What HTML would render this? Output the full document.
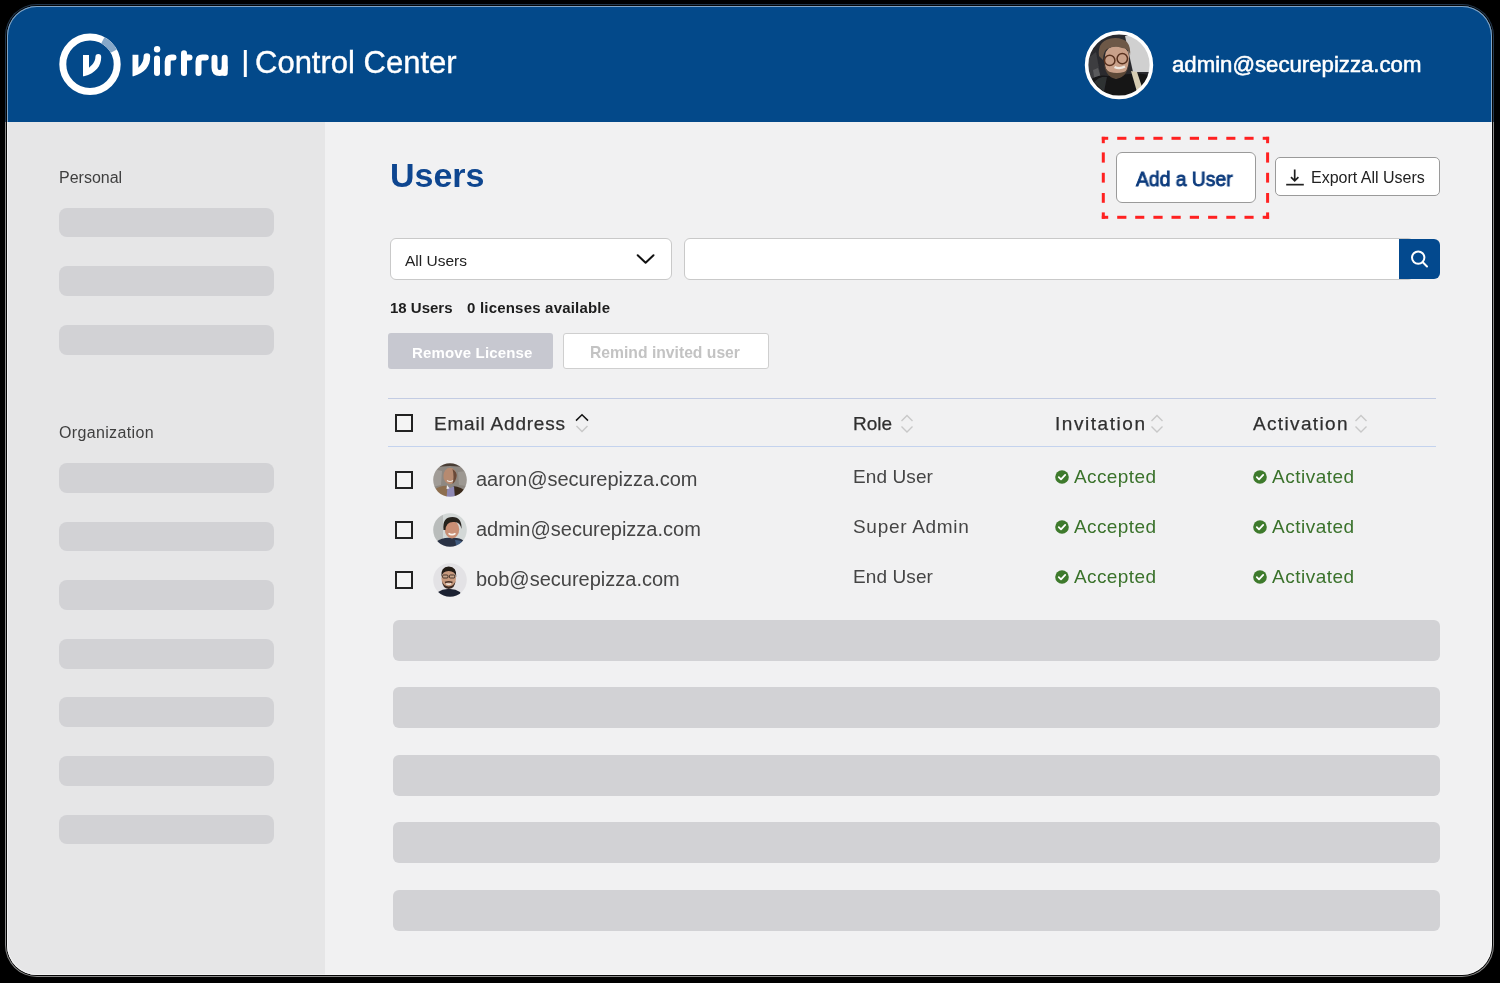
<!DOCTYPE html>
<html><head><meta charset="utf-8">
<style>
html,body{margin:0;padding:0;background:#000;width:1500px;height:983px;overflow:hidden}
*{box-sizing:border-box}
body{font-family:"Liberation Sans",sans-serif;position:relative;-webkit-font-smoothing:antialiased}
.ring{position:absolute;left:5px;top:4px;width:1489px;height:973px;border-radius:32px;background:linear-gradient(to bottom,#22374d 0,#22374d 118px,#8a8a8a 118px)}
.dark{position:absolute;left:6px;top:5px;width:1487px;height:971px;border-radius:31px;background:#050505}
.win{position:absolute;left:7px;top:6px;width:1485px;height:969px;border-radius:30px;overflow:hidden;background:#F1F1F2}
.hl{position:absolute;left:0;top:0;width:1485px;height:969px;border-radius:30px;box-shadow:inset 0 0 0 1px rgba(255,255,255,0.5)}
.hdr{position:absolute;left:0;top:0;width:1485px;height:116px;background:#03498A}
.side{position:absolute;left:0;top:116px;width:318px;height:853px;background:#E6E6E7}
.t{position:absolute;line-height:1;white-space:nowrap;will-change:transform}
.sk{position:absolute;background:#D2D2D5;border-radius:8px}
.skm{position:absolute;background:#D2D2D5;border-radius:6px;left:387px;width:1047px;height:41px}
.abs{position:absolute}
.cb{position:absolute;width:18px;height:18px;border:2px solid #222;background:#F4F4F4}
.av{position:absolute;width:34px;height:34px;border-radius:50%;overflow:hidden}
</style></head>
<body>
<div class="ring"></div><div class="dark"></div>
<div class="win">
  <div class="hdr"></div>
  <div class="side"></div>
  <div class="hl"></div>
</div>

<!-- logo -->
<svg class="abs" style="left:0;top:0" width="480" height="120" viewBox="0 0 480 120">
  <circle cx="90" cy="64.3" r="27.2" fill="none" stroke="#fff" stroke-width="7"/>
  <path d="M 102.8 40.3 A 27.2 27.2 0 0 1 113.8 51.1" fill="none" stroke="#86A8C9" stroke-width="7"/>
  <path d="M83 55 L89 55 L89 67.7 C 91.5 65.5, 95.4 62, 95.4 57 A 2.9 2.9 0 0 1 101.2 57 C 101.2 66, 96 73, 84 76.3 L83 76.3 Z" fill="#fff"/>
  <path d="M132.5 54.8 L138.4 54.8 L138.4 67.7 C 140.5 65.5, 143.6 62, 143.6 56.5 A 3.3 3.3 0 0 1 150.2 56.5 C 150.2 66, 145 73, 133.5 76.2 L132.5 76.2 Z" fill="#fff"/>
  <g fill="none" stroke="#fff" stroke-width="6" stroke-linecap="round" stroke-linejoin="round">
    <path d="M157 58.5 L157 73"/>
    <path d="M167.7 73 L167.7 61.5 Q167.7 57.6 171.5 57.6 L173.5 57.6"/>
    <path d="M184 53.3 L184 73"/>
    <path d="M184 57.6 L189.5 57.6"/>
    <path d="M198.5 73 L198.5 61.5 Q198.5 57.6 202.3 57.6 L205.8 57.6"/>
    <path d="M214.5 57.8 L214.5 67.5 Q214.5 73 219.6 73 Q224.7 73 224.7 67.5"/>
    <path d="M224.7 57.8 L224.7 73"/>
  </g>
  <circle cx="157.1" cy="49.3" r="3.2" fill="#fff"/>
  <rect x="243.8" y="50" width="3" height="27" fill="#fff"/>
</svg>
<div class="t" style="left:255px;top:46.8px;font-size:31px;color:#fff;-webkit-text-stroke:0.35px #fff">Control Center</div>

<!-- header avatar -->
<svg class="abs" style="left:1084px;top:30px" width="70" height="70" viewBox="0 0 70 70">
  <defs><clipPath id="hc"><circle cx="35" cy="35" r="32"/></clipPath>
  <filter id="bl1" x="-10%" y="-10%" width="120%" height="120%"><feGaussianBlur stdDeviation="0.7"/></filter></defs>
  <g clip-path="url(#hc)"><g filter="url(#bl1)">
    <rect x="-2" y="-2" width="74" height="74" fill="#2c2c2f"/>
    <path d="M41 6 L72 6 L72 42 L49 42 L45 24Z" fill="#d0d0d0"/>
    <path d="M2 30 L12 22 L16 44 L12 62 L2 56Z" fill="#3d3d40"/>
    <path d="M9 40 L14 38 L20 58 L12 60Z" fill="#5a5a5c"/>
    <path d="M-2 72 L6 50 Q14 44 24 46 L46 44 Q60 42 72 48 L72 72Z" fill="#141417"/>
    <path d="M10 52 Q16 46 23 47 L20 62 Z" fill="#2f3033"/>
    <path d="M47 41 L53 42 L59 60 L53 62Z" fill="#d5ccb2"/>
    <path d="M21 26 Q19 44 32 48.5 Q45 46 45 26 Q44 16 33 16 Q22 16 21 26Z" fill="#c9a18a"/>
    <path d="M20 32 Q21 47 32 49 Q44 47 45 32 Q44 41 40 42 Q33 44 26 42 Q21 40 20 32Z" fill="#5c4839"/>
    <path d="M15 26 Q13 9 31 8 Q48 8 46 26 Q45 18 38 18 Q30 15 23 19 Q19 22 19 30Z" fill="#6d5847"/>
    <circle cx="25.7" cy="30.4" r="5.2" fill="none" stroke="#58301f" stroke-width="1.5"/>
    <circle cx="38.3" cy="28.6" r="5.2" fill="none" stroke="#58301f" stroke-width="1.5"/>
    <path d="M30.5 37 Q35.5 39.5 41 36.5" fill="none" stroke="#efe9e2" stroke-width="2.3"/>
  </g></g>
  <circle cx="35" cy="35" r="32.4" fill="none" stroke="#fff" stroke-width="3.6"/>
</svg>
<div class="t" style="left:1171.5px;top:54.2px;font-size:22.2px;font-weight:400;color:#fff;-webkit-text-stroke:0.55px #fff">admin@securepizza.com</div>

<!-- sidebar -->
<div class="t" style="left:59px;top:169.5px;font-size:16px;color:#3f3f3f">Personal</div>
<div class="sk" style="left:59px;top:207.7px;width:215px;height:29.8px"></div>
<div class="sk" style="left:59px;top:266.3px;width:215px;height:29.8px"></div>
<div class="sk" style="left:59px;top:324.9px;width:215px;height:29.8px"></div>
<div class="t" style="left:59px;top:424.7px;font-size:16px;color:#3f3f3f;letter-spacing:0.35px">Organization</div>
<div class="sk" style="left:59px;top:463.0px;width:215px;height:29.8px"></div>
<div class="sk" style="left:59px;top:521.6px;width:215px;height:29.8px"></div>
<div class="sk" style="left:59px;top:580.2px;width:215px;height:29.8px"></div>
<div class="sk" style="left:59px;top:638.8px;width:215px;height:29.8px"></div>
<div class="sk" style="left:59px;top:697.4px;width:215px;height:29.8px"></div>
<div class="sk" style="left:59px;top:756.0px;width:215px;height:29.8px"></div>
<div class="sk" style="left:59px;top:814.6px;width:215px;height:29.8px"></div>

<!-- main -->
<div class="t" style="left:390px;top:158.2px;font-size:34px;font-weight:700;color:#0E4690">Users</div>

<!-- red dashed box -->
<svg class="abs" style="left:0;top:0" width="1300" height="230" viewBox="0 0 1300 230"><g fill="#FF2121"><rect x="1117.2" y="136.8" width="9.2" height="3.0"/><rect x="1117.2" y="215.8" width="9.2" height="3.0"/><rect x="1135.2" y="136.8" width="9.1" height="3.0"/><rect x="1135.2" y="215.8" width="9.1" height="3.0"/><rect x="1153.4" y="136.8" width="9.2" height="3.0"/><rect x="1153.4" y="215.8" width="9.2" height="3.0"/><rect x="1171.5" y="136.8" width="9.2" height="3.0"/><rect x="1171.5" y="215.8" width="9.2" height="3.0"/><rect x="1189.8" y="136.8" width="9.2" height="3.0"/><rect x="1189.8" y="215.8" width="9.2" height="3.0"/><rect x="1208.1" y="136.8" width="9.1" height="3.0"/><rect x="1208.1" y="215.8" width="9.1" height="3.0"/><rect x="1226.3" y="136.8" width="9.1" height="3.0"/><rect x="1226.3" y="215.8" width="9.1" height="3.0"/><rect x="1244.5" y="136.8" width="9.1" height="3.0"/><rect x="1244.5" y="215.8" width="9.1" height="3.0"/><rect x="1101.8" y="152.4" width="3.0" height="10.2"/><rect x="1266.1" y="152.4" width="3.0" height="10.2"/><rect x="1101.8" y="172.8" width="3.0" height="9.8"/><rect x="1266.1" y="172.8" width="3.0" height="9.8"/><rect x="1101.8" y="193.0" width="3.0" height="9.8"/><rect x="1266.1" y="193.0" width="3.0" height="9.8"/><rect x="1101.8" y="136.8" width="6.4" height="3.0"/><rect x="1101.8" y="136.8" width="3.0" height="6.4"/><rect x="1262.7" y="136.8" width="6.4" height="3.0"/><rect x="1266.1" y="136.8" width="3.0" height="6.4"/><rect x="1101.8" y="215.8" width="6.4" height="3.0"/><rect x="1101.8" y="212.4" width="3.0" height="6.4"/><rect x="1262.7" y="215.8" width="6.4" height="3.0"/><rect x="1266.1" y="212.4" width="3.0" height="6.4"/></g></svg>
<div class="abs" style="left:1116px;top:151.5px;width:140px;height:51.5px;background:#fff;border:1px solid #9a9a9a;border-radius:6px"></div>
<div class="t" style="left:1136px;top:168.6px;font-size:20px;font-weight:400;color:#0B3A7C;-webkit-text-stroke:0.85px #0B3A7C;transform:scaleX(0.965);transform-origin:0 0">Add a User</div>

<div class="abs" style="left:1275px;top:157px;width:165px;height:39px;background:#fff;border:1px solid #9a9a9a;border-radius:5px"></div>
<svg class="abs" style="left:1284px;top:166px" width="22" height="22" viewBox="0 0 22 22">
  <path d="M10.7 3.6 L10.7 14.6 M7 11.2 L10.7 14.9 L14.4 11.2" fill="none" stroke="#1e1e1e" stroke-width="1.7"/>
  <rect x="2.2" y="17.8" width="17.6" height="1.7" fill="#222"/>
</svg>
<div class="t" style="left:1311px;top:169.7px;font-size:16px;color:#222">Export All Users</div>

<!-- select -->
<div class="abs" style="left:390px;top:238px;width:282px;height:42px;background:#fff;border:1px solid #c9c9c9;border-radius:6px"></div>
<div class="t" style="left:405px;top:252.7px;font-size:15.5px;color:#222">All Users</div>
<svg class="abs" style="left:634px;top:250px" width="24" height="18" viewBox="0 0 24 18">
  <path d="M3.7 5.2 L11.6 12.8 L19.5 5.2" fill="none" stroke="#111" stroke-width="2" stroke-linecap="round" stroke-linejoin="round"/>
</svg>
<!-- search -->
<div class="abs" style="left:684px;top:238px;width:730px;height:42px;background:#fff;border:1px solid #c9c9c9;border-radius:6px"></div>
<div class="abs" style="left:1399px;top:239px;width:41px;height:40px;background:#03498E;border-radius:0 6px 6px 0"></div>
<svg class="abs" style="left:1405px;top:244px" width="30" height="30" viewBox="0 0 30 30">
  <circle cx="13.2" cy="13.6" r="6.2" fill="none" stroke="#fff" stroke-width="2"/>
  <path d="M17.8 18.3 L22 22.5" stroke="#fff" stroke-width="2" stroke-linecap="round"/>
</svg>

<div class="t" style="left:390px;top:300px;font-size:15px;font-weight:700;color:#1d1d1d">18 Users</div>
<div class="t" style="left:467px;top:300px;font-size:15px;font-weight:700;color:#1d1d1d;letter-spacing:0.2px">0 licenses available</div>

<div class="abs" style="left:388px;top:332.5px;width:164.5px;height:36.5px;background:#C7C8D0;border-radius:3px"></div>
<div class="t" style="left:412px;top:344.5px;font-size:15px;font-weight:700;color:#fff;letter-spacing:0.15px">Remove License</div>
<div class="abs" style="left:562.5px;top:332.5px;width:206px;height:36.5px;background:#fff;border:1px solid #cfcfcf;border-radius:3px"></div>
<div class="t" style="left:590px;top:344.5px;font-size:15.7px;font-weight:700;color:#c3c3c3">Remind invited user</div>

<!-- table -->
<div class="abs" style="left:388px;top:397.5px;width:1048px;height:1.5px;background:#C3CCE3"></div>
<div class="abs" style="left:388px;top:445.5px;width:1048px;height:1.5px;background:#C4D3EE"></div>
<div class="cb" style="left:395px;top:414px"></div>
<div class="t" style="left:434px;top:413.9px;font-size:19px;color:#2f2f2f;-webkit-text-stroke:0.25px #2f2f2f;letter-spacing:0.8px">Email Address</div>
<svg class="abs" style="left:572px;top:411px" width="20" height="26" viewBox="0 0 20 26">
  <path d="M4 9.6 L10 3.8 L16 9.6" fill="none" stroke="#151515" stroke-width="1.5"/>
  <path d="M4.5 14.9 L10 20.6 L15.5 14.9" fill="none" stroke="#c8c8c8" stroke-width="1.4"/>
</svg>
<div class="t" style="left:853px;top:413.9px;font-size:19px;color:#2f2f2f;-webkit-text-stroke:0.25px #2f2f2f">Role</div>
<svg class="abs" style="left:897px;top:411px" width="20" height="26" viewBox="0 0 20 26">
  <path d="M4.5 10 L10 4.5 L15.5 10" fill="none" stroke="#c8c8c8" stroke-width="1.4"/>
  <path d="M4.5 15.5 L10 21 L15.5 15.5" fill="none" stroke="#c8c8c8" stroke-width="1.4"/>
</svg>
<div class="t" style="left:1055px;top:413.9px;font-size:19px;color:#2f2f2f;-webkit-text-stroke:0.25px #2f2f2f;letter-spacing:1.55px">Invitation</div>
<svg class="abs" style="left:1146.5px;top:411px" width="20" height="26" viewBox="0 0 20 26">
  <path d="M4.5 10 L10 4.5 L15.5 10" fill="none" stroke="#c8c8c8" stroke-width="1.4"/>
  <path d="M4.5 15.5 L10 21 L15.5 15.5" fill="none" stroke="#c8c8c8" stroke-width="1.4"/>
</svg>
<div class="t" style="left:1253px;top:413.9px;font-size:19px;color:#2f2f2f;-webkit-text-stroke:0.25px #2f2f2f;letter-spacing:1.35px">Activation</div>
<svg class="abs" style="left:1350.5px;top:411px" width="20" height="26" viewBox="0 0 20 26">
  <path d="M4.5 10 L10 4.5 L15.5 10" fill="none" stroke="#c8c8c8" stroke-width="1.4"/>
  <path d="M4.5 15.5 L10 21 L15.5 15.5" fill="none" stroke="#c8c8c8" stroke-width="1.4"/>
</svg>
<div class="cb" style="left:395px;top:470.8px"></div>
<svg class="abs" style="left:433px;top:463px" width="34" height="34" viewBox="0 0 34 34"><defs><clipPath id="ac0"><circle cx="17" cy="17" r="16.8"/></clipPath><filter id="bf0" x="-10%" y="-10%" width="120%" height="120%"><feGaussianBlur stdDeviation="0.45"/></filter></defs><g clip-path="url(#ac0)"><g filter="url(#bf0)"><rect x="-2" y="-2" width="38" height="38" fill="#8e8882"/>
 <path d="M0 6 L9 8 L8 22 L0 24Z" fill="#a19c97"/><path d="M34 8 L25 9 L26 22 L34 23Z" fill="#9d9892"/>
 <path d="M0 0 L34 0 L34 5 Q17 1 0 5Z" fill="#4a3e36"/>
 <path d="M-2 36 L1 27 Q8 22 15 23 L16 36Z" fill="#8d6e50"/>
 <path d="M20 23 Q29 24 33 29 L36 36 L21 36Z" fill="#3b2a1f"/>
 <path d="M14.5 23 L13.5 36 L22 36 L21 23 L17.8 25Z" fill="#8e88b4"/>
 <path d="M14 22 L16.5 25.5 L13.5 26Z" fill="#f0f0f0"/>
 <ellipse cx="17" cy="13" rx="6.6" ry="8.3" fill="#b78a70"/>
 <path d="M19.5 6 Q24.5 9 23.5 14 Q22.5 19 19.5 21 Q21.5 14 19.5 6Z" fill="#6a4a38"/>
 <path d="M14 17.5 Q17 19.5 20 17.5" stroke="#f2ece6" stroke-width="1.2" fill="none"/></g></g></svg>
<div class="t" style="left:476px;top:468.9px;font-size:20px;color:#454545">aaron@securepizza.com</div>
<div class="t" style="left:853px;top:467.1px;font-size:19px;color:#454545;letter-spacing:0.1px">End User</div>
<svg class="abs" style="left:1055px;top:469.8px" width="14" height="14" viewBox="0 0 14 14"><circle cx="7" cy="7" r="6.8" fill="#3E7A2C"/><path d="M3.8 7.2 L6 9.4 L10.2 4.9" fill="none" stroke="#fff" stroke-width="1.8" stroke-linecap="round" stroke-linejoin="round"/></svg>
<div class="t" style="left:1073.5px;top:466.6px;font-size:19px;color:#3A722B;letter-spacing:0.4px">Accepted</div>
<svg class="abs" style="left:1253px;top:469.8px" width="14" height="14" viewBox="0 0 14 14"><circle cx="7" cy="7" r="6.8" fill="#3E7A2C"/><path d="M3.8 7.2 L6 9.4 L10.2 4.9" fill="none" stroke="#fff" stroke-width="1.8" stroke-linecap="round" stroke-linejoin="round"/></svg>
<div class="t" style="left:1271.8px;top:466.6px;font-size:19px;color:#3A722B;letter-spacing:0.5px">Activated</div>
<div class="cb" style="left:395px;top:520.8px"></div>
<svg class="abs" style="left:433px;top:513px" width="34" height="34" viewBox="0 0 34 34"><defs><clipPath id="ac1"><circle cx="17" cy="17" r="16.8"/></clipPath><filter id="bf1" x="-10%" y="-10%" width="120%" height="120%"><feGaussianBlur stdDeviation="0.45"/></filter></defs><g clip-path="url(#ac1)"><g filter="url(#bf1)"><rect x="-2" y="-2" width="38" height="38" fill="#d3d8d7"/>
 <rect x="-2" y="-2" width="12" height="38" fill="#b9bcbb"/>
 <path d="M-2 36 L3 29 Q10 24 18 25 Q26 24 31 28 L36 36Z" fill="#2b3344"/>
 <path d="M22 27 Q28 27 31 30 L33 36 L24 36Z" fill="#3f5a7e"/>
 <ellipse cx="19" cy="16.5" rx="7.2" ry="9" fill="#c98f74"/>
 <path d="M10.5 17 Q9 4 19.5 4 Q29 4 28.5 16 Q27 8 20 9 Q13 9 12.5 17Z" fill="#27211e"/>
 <path d="M15.5 20.3 Q19 23 22.5 20.3" stroke="#fbf4ee" stroke-width="1.6" fill="none"/></g></g></svg>
<div class="t" style="left:476px;top:518.9px;font-size:20px;color:#454545">admin@securepizza.com</div>
<div class="t" style="left:853px;top:517.1px;font-size:19px;color:#454545;letter-spacing:0.7px">Super Admin</div>
<svg class="abs" style="left:1055px;top:519.8px" width="14" height="14" viewBox="0 0 14 14"><circle cx="7" cy="7" r="6.8" fill="#3E7A2C"/><path d="M3.8 7.2 L6 9.4 L10.2 4.9" fill="none" stroke="#fff" stroke-width="1.8" stroke-linecap="round" stroke-linejoin="round"/></svg>
<div class="t" style="left:1073.5px;top:516.6px;font-size:19px;color:#3A722B;letter-spacing:0.4px">Accepted</div>
<svg class="abs" style="left:1253px;top:519.8px" width="14" height="14" viewBox="0 0 14 14"><circle cx="7" cy="7" r="6.8" fill="#3E7A2C"/><path d="M3.8 7.2 L6 9.4 L10.2 4.9" fill="none" stroke="#fff" stroke-width="1.8" stroke-linecap="round" stroke-linejoin="round"/></svg>
<div class="t" style="left:1271.8px;top:516.6px;font-size:19px;color:#3A722B;letter-spacing:0.5px">Activated</div>
<div class="cb" style="left:395px;top:570.8px"></div>
<svg class="abs" style="left:433px;top:563px" width="34" height="34" viewBox="0 0 34 34"><defs><clipPath id="ac2"><circle cx="17" cy="17" r="16.8"/></clipPath><filter id="bf2" x="-10%" y="-10%" width="120%" height="120%"><feGaussianBlur stdDeviation="0.45"/></filter></defs><g clip-path="url(#ac2)"><g filter="url(#bf2)"><rect x="-2" y="-2" width="38" height="38" fill="#e3e2e5"/>
 <path d="M3 36 L5 29 Q10 25.5 16 26 Q22 25.5 27 29 L30 36Z" fill="#1d2130"/>
 <ellipse cx="15.7" cy="15.5" rx="7.3" ry="9" fill="#c89a7e"/>
 <path d="M9 18 Q9.5 25.5 15.7 26 Q22 25.5 22.5 18 Q21 23 15.7 23.5 Q10.5 23 9 18Z" fill="#3e2c24"/>
 <path d="M12 19.5 Q15.7 18 19.5 19.5" stroke="#4a3228" stroke-width="1.4" fill="none"/>
 <path d="M8.3 14 Q7.5 3.5 15.7 3.5 Q24 3.5 23.3 14 Q22 8 15.7 8 Q9.5 8 8.3 14Z" fill="#231a16"/>
 <rect x="9.6" y="12" width="5.4" height="3" rx="1" fill="#c8a58a" stroke="#3a2a22" stroke-width="0.9"/>
 <rect x="16.4" y="12" width="5.4" height="3" rx="1" fill="#c8a58a" stroke="#3a2a22" stroke-width="0.9"/>
 <path d="M13.3 20.6 Q15.7 22 18.2 20.6" stroke="#f4eee8" stroke-width="1.4" fill="none"/></g></g></svg>
<div class="t" style="left:476px;top:568.9px;font-size:20px;color:#454545">bob@securepizza.com</div>
<div class="t" style="left:853px;top:567.1px;font-size:19px;color:#454545;letter-spacing:0.1px">End User</div>
<svg class="abs" style="left:1055px;top:569.8px" width="14" height="14" viewBox="0 0 14 14"><circle cx="7" cy="7" r="6.8" fill="#3E7A2C"/><path d="M3.8 7.2 L6 9.4 L10.2 4.9" fill="none" stroke="#fff" stroke-width="1.8" stroke-linecap="round" stroke-linejoin="round"/></svg>
<div class="t" style="left:1073.5px;top:566.6px;font-size:19px;color:#3A722B;letter-spacing:0.4px">Accepted</div>
<svg class="abs" style="left:1253px;top:569.8px" width="14" height="14" viewBox="0 0 14 14"><circle cx="7" cy="7" r="6.8" fill="#3E7A2C"/><path d="M3.8 7.2 L6 9.4 L10.2 4.9" fill="none" stroke="#fff" stroke-width="1.8" stroke-linecap="round" stroke-linejoin="round"/></svg>
<div class="t" style="left:1271.8px;top:566.6px;font-size:19px;color:#3A722B;letter-spacing:0.5px">Activated</div>
<div class="skm" style="top:619.5px;left:393px"></div>
<div class="skm" style="top:687.0px;left:393px"></div>
<div class="skm" style="top:754.5px;left:393px"></div>
<div class="skm" style="top:822.0px;left:393px"></div>
<div class="skm" style="top:889.5px;left:393px"></div>
</body></html>
